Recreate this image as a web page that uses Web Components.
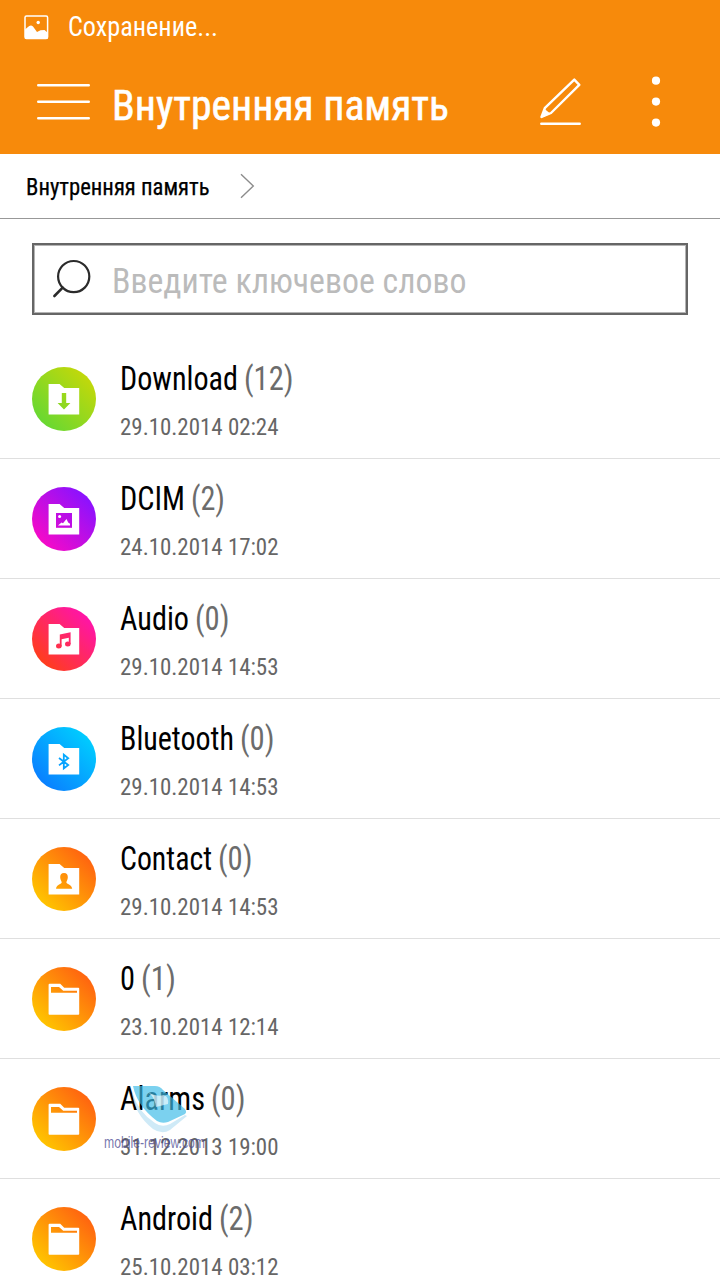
<!DOCTYPE html>
<html lang="ru">
<head>
  <meta charset="UTF-8" />
  <title>Внутренняя память</title>
  <style>
    body {
      margin: 0;
      width: 720px;
      height: 1280px;
      overflow: hidden;
      background: #fff;
      font-family: "Roboto Condensed", Roboto, sans-serif;
      font-stretch: 75%;
      color: #000;
    }
  </style>
</head>
<body>
  <file-manager></file-manager>

  <script>
    // narrow label: squeezes its text to the given width
    class FitText extends HTMLElement {
      constructor() {
        super();
        this.attachShadow({ mode: "open" });
        this.shadowRoot.innerHTML = `
          <style>
            :host { display: block; white-space: nowrap; flex: none; }
            span { display: inline-block; transform-origin: 0 50%; }
          </style>
          <span><slot></slot></span>`;
      }
      connectedCallback() {
        const want = parseFloat(this.getAttribute("width"));
        const span = this.shadowRoot.querySelector("span");
        this.style.width = want + "px";
        const real = span.getBoundingClientRect().width;
        if (real) span.style.transform = `scaleX(${want / real})`;
      }
    }

    class StatusBar extends HTMLElement {
      constructor() {
        super();
        this.attachShadow({ mode: "open" });
        this.shadowRoot.innerHTML = `
          <style>
            :host {
              display: flex;
              align-items: center;
              height: 54px;
              padding-left: 24px;
              gap: 19px;
              background: #f78a0b;
              color: #fff;
              font-size: 27px;
              line-height: 54px;
            }
            svg { flex: none; }
          </style>
          <svg width="25" height="25" viewBox="0 0 25 25">
            <rect x="1" y="1" width="22.6" height="22.6" rx="1.5" fill="none" stroke="#fff" stroke-width="1.5"/>
            <path d="M1 14.5L5.2 11Q7.2 9.6 9 11.5L13 17L16.5 15.2L20.5 15L24 18V23.5H1Z" fill="#fff"/>
            <circle cx="14.2" cy="7.5" r="1.7" fill="#fff"/>
          </svg>
          <fit-text width="150"><slot></slot></fit-text>`;
      }
    }

    class TitleBar extends HTMLElement {
      constructor() {
        super();
        this.attachShadow({ mode: "open" });
        this.shadowRoot.innerHTML = `
          <style>
            :host {
              display: flex;
              align-items: center;
              box-sizing: border-box;
              height: 100px;
              padding: 0 59px 0 37px;
              background: #f78a0b;
              color: #fff;
              font-size: 43px;
              line-height: 98px;
            }
            svg { flex: none; margin-bottom: 4px; }
            fit-text { margin-top: 2px; -webkit-text-stroke: .6px #fff; }
            .menu { margin-right: 22px; }
            .edit { margin-left: auto; margin-right: 69px; }
          </style>
          <svg class="menu" width="53" height="38" viewBox="0 0 53 38">
            <path d="M1.2 2.2H51.8M1.2 18.7H51.8M1.2 35.2H51.8" stroke="#fff" stroke-width="2.4" stroke-linecap="round"/>
          </svg>
          <fit-text width="337"><slot></slot></fit-text>
          <svg class="edit" width="42" height="48" viewBox="0 0 42 48">
            <path d="M34.3 1.6L39.3 6.8L11 35L1.5 39L5 29.8Z" fill="none" stroke="#fff" stroke-width="2.4" stroke-linejoin="round"/>
            <path d="M4.6 31L1 40L10.5 35.8Z" fill="#fff"/>
            <path d="M1.3 45.7H39.7" stroke="#fff" stroke-width="2.5" stroke-linecap="round"/>
          </svg>
          <svg width="10" height="52" viewBox="0 0 10 52" fill="#fff">
            <circle cx="5" cy="4.7" r="4.1"/>
            <circle cx="5" cy="25.6" r="4.1"/>
            <circle cx="5" cy="46.6" r="4.1"/>
          </svg>`;
      }
    }

    class PathBar extends HTMLElement {
      constructor() {
        super();
        this.attachShadow({ mode: "open" });
        this.shadowRoot.innerHTML = `
          <style>
            :host {
              display: flex;
              align-items: center;
              box-sizing: border-box;
              height: 65px;
              padding-left: 25.5px;
              gap: 30px;
              border-bottom: 1px solid #989898;
              font-size: 24px;
              line-height: 64px;
            }
            fit-text { margin-top: 2px; -webkit-text-stroke: .25px #000; }
          </style>
          <fit-text width="183.5"><slot></slot></fit-text>
          <svg width="16" height="26" viewBox="0 0 16 26">
            <path d="M2 1.2 L14.3 13 L2 24.8" fill="none" stroke="#8c8c8c" stroke-width="1.4"/>
          </svg>`;
      }
    }

    class SearchBox extends HTMLElement {
      constructor() {
        super();
        this.attachShadow({ mode: "open" });
        this.shadowRoot.innerHTML = `
          <style>
            :host { display: block; padding: 24px 32px; }
            .box {
              display: flex;
              align-items: center;
              box-sizing: border-box;
              height: 72px;
              padding-left: 18px;
              gap: 20px;
              border: 2px solid #666;
              box-shadow: inset 0 0 0 1px #b4b4b4;
              color: #bbb;
              font-size: 35.5px;
              line-height: 64px;
            }
            fit-text { margin-top: 4px; }
          </style>
          <div class="box">
            <svg width="40" height="40" viewBox="0 0 40 40">
              <circle cx="21.7" cy="17.6" r="15.6" fill="none" stroke="#2b2b2b" stroke-width="2.2"/>
              <path d="M10.7 28.7 L2.4 37" stroke="#2b2b2b" stroke-width="2.6" stroke-linecap="round"/>
            </svg>
            <fit-text width="354.5"><slot></slot></fit-text>
          </div>`;
      }
    }

    // glyph is cut out of the folder with the gradient of the circle
    const GLYPHS = {
      download: `<path d="M29.8 26H34.2V36H38.4L32 42.4L25.6 36H29.8Z"/>`,
      picture: `<rect x="24" y="26" width="16" height="14.8"/>
        <path fill="#fff" d="M26 38.6L29.5 35.4L31 36.2L34.5 32L36.2 35.4L38 36.8V38.6Z"/>
        <circle cx="27.6" cy="29.4" r="1.5" fill="#fff"/>`,
      music: `<path d="M27.8 27.4L38.6 25.2V37H36.8V30.8L29.6 32.2V39.4H27.8Z"/>
        <ellipse cx="26.8" cy="39" rx="2.8" ry="2.5"/>
        <ellipse cx="35.8" cy="37" rx="2.8" ry="2.5"/>`,
      bluetooth: `<path d="M27 31L36.2 38L31.8 41.4V27.6L36.2 31.2L27 38.4" fill="none" stroke-width="1.8" class="line"/>`,
      person: `<path d="M32 26C34.8 26 36 28 35.8 30.4C35.7 32.6 34.6 34 34.4 35.2C34.3 37.2 39.6 37 40.2 41.8H24C24.6 37 29.8 37.2 29.7 35.2C29.5 34 28.3 32.6 28.2 30.4C28 28 29.2 26 32 26Z"/>`,
      plain: `<path d="M19 20H27L31.2 23.8H45V25.8H19Z"/>`
    };

    class FolderIcon extends HTMLElement {
      connectedCallback() {
        const [from, to] = this.getAttribute("colors").split(" ");
        const glyph = this.getAttribute("glyph");
        const folder = glyph === "plain"
          ? "M17.6 16.8H28.2L32.2 20.8H46.4Q47.2 20.8 47.2 21.6V47Q47.2 47.8 46.4 47.8H17.4Q16.6 47.8 16.6 47V17.8Q16.6 16.8 17.6 16.8Z"
          : "M16.6 17H27.6L32.2 21H47.2V47.6H16.6Z";
        this.attachShadow({ mode: "open" });
        this.shadowRoot.innerHTML = `
          <style>
            :host { display: block; width: 64px; height: 64px; }
            svg { display: block; }
            .line { stroke: url(#g); }
          </style>
          <svg width="64" height="64" viewBox="0 0 64 64">
            <defs>
              <linearGradient id="g" gradientUnits="userSpaceOnUse" x1="9" y1="55" x2="55" y2="9">
                <stop offset="0" stop-color="${from}"/>
                <stop offset="1" stop-color="${to}"/>
              </linearGradient>
            </defs>
            <circle cx="32" cy="32" r="32" fill="url(#g)"/>
            <path d="${folder}" fill="#fff"/>
            <g fill="url(#g)">${GLYPHS[glyph]}</g>
          </svg>`;
      }
    }

    class FileRow extends HTMLElement {
      connectedCallback() {
        const at = (name) => this.getAttribute(name);
        this.attachShadow({ mode: "open" });
        this.shadowRoot.innerHTML = `
          <style>
            :host {
              display: flex;
              box-sizing: border-box;
              height: 120px;
              padding: 20px 32px 0;
              gap: 24px;
              border-bottom: 1px solid #dfdfdf;
            }
            folder-icon { margin-top: 8px; }
            .name { display: flex; gap: 5.5px; font-size: 32.5px; line-height: 40px; }
            .count { color: #6c6c6c; }
            .date { margin-top: 13px; font-size: 24px; line-height: 30px; color: #666; }
          </style>
          <folder-icon glyph="${at("glyph")}" colors="${at("colors")}"></folder-icon>
          <div>
            <div class="name">
              <fit-text width="${at("name-width")}">${at("name")}</fit-text>
              <fit-text class="count" width="${at("count-width")}">(${at("count")})</fit-text>
            </div>
            <fit-text class="date" width="158.5">${at("date")}</fit-text>
          </div>`;
      }
    }

    class SiteMark extends HTMLElement {
      constructor() {
        super();
        this.attachShadow({ mode: "open" });
        this.shadowRoot.innerHTML = `
          <style>
            :host {
              display: flex;
              flex-direction: column;
              position: absolute;
              left: 104px;
              top: 1084px;
              font: 16px/18px "Liberation Sans", sans-serif;
              color: rgba(72, 72, 145, .75);
            }
            svg { margin-left: 26px; }
          </style>
          <svg width="60" height="50" viewBox="0 0 60 50">
            <path d="M3 2H25Q30 2 33 6L55 25Q58 29 53 31L38 38Q32 40 27 37Q7 22 3 2Z" fill="#3dbbe8" fill-opacity=".68"/>
            <path d="M19 9Q25 14 26 23L38 20Q39 13 34 11Q27 13 19 9Z" fill="#fff" fill-opacity=".6"/>
            <path d="M2 8Q4 30 23 45Q32 51 40 46L57 32L55 31L40 40Q32 44 25 39Q8 28 2 8Z" fill="#b5def2" fill-opacity=".65"/>
          </svg>
          <fit-text width="101"><slot></slot></fit-text>`;
      }
    }

    const FILES = [
      ["Download", 12, "29.10.2014 02:24", "download", "#68d832 #c2d80a", 118, 49.5],
      ["DCIM", 2, "24.10.2014 17:02", "picture", "#f50ac8 #8a12ff", 65, 34],
      ["Audio", 0, "29.10.2014 14:53", "music", "#ff3d1c #ff14a8", 69, 34.5],
      ["Bluetooth", 0, "29.10.2014 14:53", "bluetooth", "#0a80ff #00ccff", 114, 34.5],
      ["Contact", 0, "29.10.2014 14:53", "person", "#ffc400 #ff6410", 92, 34.5],
      ["0", 1, "23.10.2014 12:14", "plain", "#ffc400 #ff6410", 15, 35],
      ["Alarms", 0, "31.12.2013 19:00", "plain", "#ffc400 #ff6410", 85, 34.5],
      ["Android", 2, "25.10.2014 03:12", "plain", "#ffc400 #ff6410", 93, 34.5]
    ];

    class FileManager extends HTMLElement {
      connectedCallback() {
        this.attachShadow({ mode: "open" });
        this.shadowRoot.innerHTML = `
          <style>
            :host { display: block; position: relative; height: 1280px; overflow: hidden; }
          </style>
          <status-bar>Сохранение...</status-bar>
          <title-bar>Внутренняя память</title-bar>
          <path-bar>Внутренняя память</path-bar>
          <search-box>Введите ключевое слово</search-box>
          ${FILES.map(([name, count, date, glyph, colors, w, cw]) => `
            <file-row name="${name}" count="${count}" date="${date}" glyph="${glyph}"
              colors="${colors}" name-width="${w}" count-width="${cw}"></file-row>`).join("")}
          <site-mark>mobile-review.com</site-mark>`;
      }
    }

    customElements.define("fit-text", FitText);
    customElements.define("status-bar", StatusBar);
    customElements.define("title-bar", TitleBar);
    customElements.define("path-bar", PathBar);
    customElements.define("search-box", SearchBox);
    customElements.define("folder-icon", FolderIcon);
    customElements.define("file-row", FileRow);
    customElements.define("site-mark", SiteMark);
    customElements.define("file-manager", FileManager);
  </script>
</body>
</html>
